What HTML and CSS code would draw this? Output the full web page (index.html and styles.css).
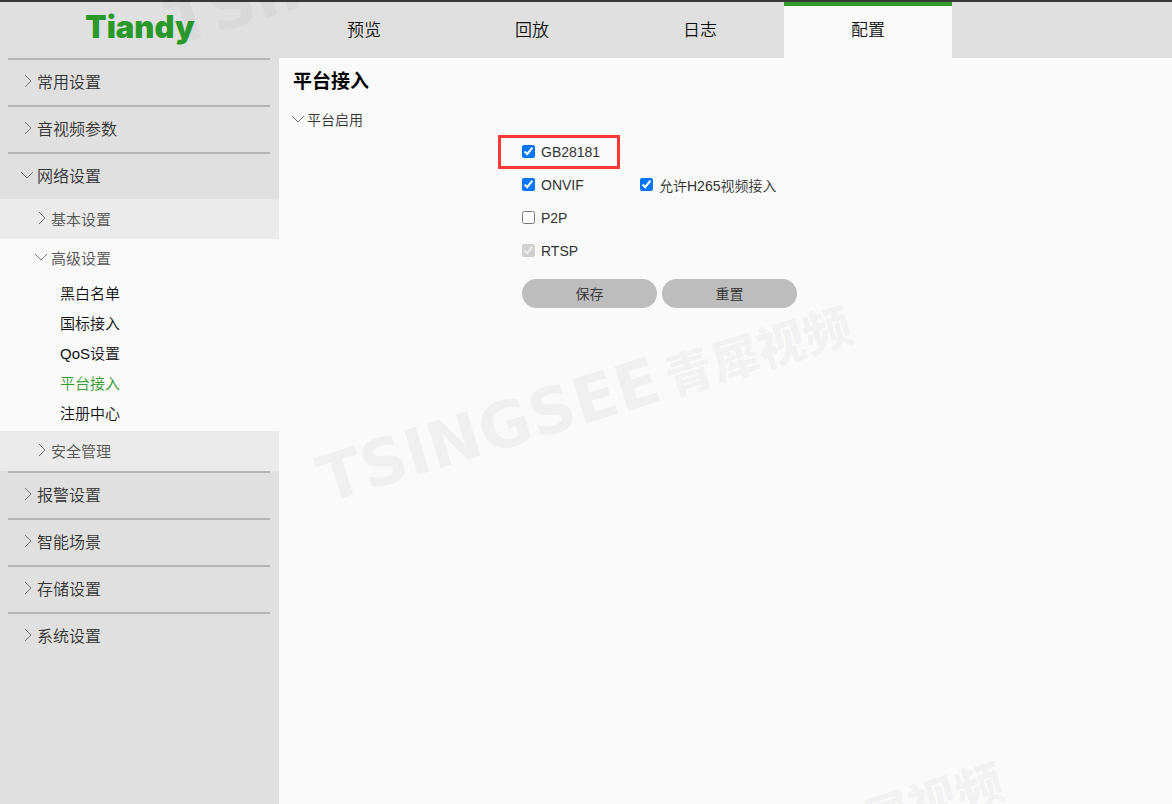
FILE: index.html
```
<!DOCTYPE html>
<html lang="zh-CN">
<head>
  <meta charset="UTF-8">
  <meta name="viewport" content="width=device-width, initial-scale=1.0">
  <title>Tiandy - 平台接入</title>
  <link rel="stylesheet" href="styles.css">
</head>
<body>
  <header class="header">
    <a href="#" class="logo">Tiandy</a>
    <nav class="tabs">
      <a href="#" class="tab">预览</a>
      <a href="#" class="tab">回放</a>
      <a href="#" class="tab">日志</a>
      <a href="#" class="tab active">配置</a>
    </nav>
  </header>

  <div class="layout">
    <nav class="sidebar">
      <button class="menu-item"><svg class="arrow" viewBox="0 0 14 14"><path d="M5 1l6 6-6 6"/></svg>常用设置</button>
      <button class="menu-item"><svg class="arrow" viewBox="0 0 14 14"><path d="M5 1l6 6-6 6"/></svg>音视频参数</button>
      <button class="menu-item"><svg class="arrow" viewBox="0 0 14 14"><path d="M1 4l6 6 6-6"/></svg>网络设置</button>

      <div class="submenu">
        <button class="submenu-item"><svg class="arrow" viewBox="0 0 14 14"><path d="M5 1l6 6-6 6"/></svg>基本设置</button>
        <div class="submenu-open">
          <button class="submenu-item open"><svg class="arrow" viewBox="0 0 14 14"><path d="M1 4l6 6 6-6"/></svg>高级设置</button>
          <div class="links">
            <a href="#">黑白名单</a>
            <a href="#">国标接入</a>
            <a href="#">QoS设置</a>
            <a href="#" class="current">平台接入</a>
            <a href="#">注册中心</a>
          </div>
        </div>
        <button class="submenu-item"><svg class="arrow" viewBox="0 0 14 14"><path d="M5 1l6 6-6 6"/></svg>安全管理</button>
      </div>

      <button class="menu-item"><svg class="arrow" viewBox="0 0 14 14"><path d="M5 1l6 6-6 6"/></svg>报警设置</button>
      <button class="menu-item"><svg class="arrow" viewBox="0 0 14 14"><path d="M5 1l6 6-6 6"/></svg>智能场景</button>
      <button class="menu-item"><svg class="arrow" viewBox="0 0 14 14"><path d="M5 1l6 6-6 6"/></svg>存储设置</button>
      <button class="menu-item"><svg class="arrow" viewBox="0 0 14 14"><path d="M5 1l6 6-6 6"/></svg>系统设置</button>
    </nav>

    <main class="content">
      <h1>平台接入</h1>
      <h2><svg class="arrow" viewBox="0 0 14 14"><path d="M1 4l6 6 6-6"/></svg>平台启用</h2>

      <form class="platform-form">
        <div class="row">
          <label class="check highlight"><input type="checkbox" checked>GB28181</label>
        </div>
        <div class="row">
          <label class="check"><input type="checkbox" checked>ONVIF</label>
          <label class="check"><input type="checkbox" checked>允许H265视频接入</label>
        </div>
        <div class="row">
          <label class="check"><input type="checkbox">P2P</label>
        </div>
        <div class="row">
          <label class="check"><input type="checkbox" checked disabled>RTSP</label>
        </div>
        <div class="actions">
          <button type="button">保存</button>
          <button type="button">重置</button>
        </div>
      </form>
    </main>
  </div>

  <!-- Watermark over the whole page -->
  <div class="watermarks" aria-hidden="true">
    <div class="watermark mark-top">TSIN</div>
    <div class="watermark mark-middle">TSINGSEE<span>青犀视频</span></div>
    <div class="watermark mark-bottom"><span>犀视频</span></div>
  </div>
</body>
</html>
```
FILE: styles.css
```
* {
  box-sizing: border-box;
}
body {
  font-family: "Liberation Sans", "Noto Sans CJK SC", sans-serif;
  font-size: 14px;
  font-weight: 350;
  color: #333;
  margin: 0;
  min-height: 100vh;
  display: flex;
  flex-direction: column;
  position: relative;
  background-color: #fafafa;
}
a {
  color: inherit;
  text-decoration: none;
}
button {
  font: inherit;
  color: inherit;
  border: none;
  padding: 0;
  background: none;
  cursor: pointer;
}
.header {
  display: grid;
  grid-template-columns: 280px 1fr;
  height: 58px;
  border-top: 2px solid #383838;
  background-color: #e0e0e0;
}
.logo {
  font-family: Inter, sans-serif;
  font-size: 31px;
  font-weight: 900;
  line-height: 50px;
  text-align: center;
  color: #28992a;
}
.tabs {
  display: flex;
}
.tab {
  width: 168px;
  padding-bottom: 4px;
  border-top: 4px solid transparent;
  border-bottom: 4px solid transparent;
  display: flex;
  align-items: center;
  justify-content: center;
  font-size: 17px;
  color: #111;
}
.tab.active {
  border-top-color: #33992b;
  background-color: #fafafa;
}
.layout {
  flex: 1;
  display: flex;
}
.arrow {
  width: 14px;
  height: 14px;
  flex: none;
  fill: none;
  stroke: #777;
  stroke-width: 1;
}

/* Sidebar */
.sidebar {
  width: 279px;
  flex: none;
  background-color: #e0e0e0;
}
.menu-item {
  display: flex;
  align-items: center;
  gap: 3px;
  width: 262px;
  height: 47px;
  margin-left: 8px;
  padding-left: 12px;
  padding-bottom: 4px;
  border-top: 2px solid #b5b5b5;
  font-size: 16px;
}
.submenu {
  background-color: #ebebeb;
}
.submenu-item {
  display: flex;
  align-items: center;
  gap: 3px;
  width: 100%;
  height: 40px;
  padding-left: 34px;
  padding-bottom: 2px;
  font-size: 15px;
  color: #555;
}
.submenu-item.open {
  height: 38px;
}
.submenu-open {
  background-color: #fafafa;
}
.links {
  padding: 2px 0 2px 60px;
}
.links a {
  display: block;
  line-height: 30px;
  font-size: 15px;
  color: #111;
}
.links a.current {
  color: #33992b;
}

/* Content */
.content {
  flex: 1;
  padding: 8px 12px;
}
h1 {
  font-size: 19px;
  line-height: 32px;
  margin: 0 2px;
  color: #000;
}
h2 {
  display: flex;
  align-items: center;
  gap: 2px;
  height: 33px;
  margin: 4px 0 0;
  font-size: 14px;
  font-weight: 350;
}
.platform-form {
  padding-left: 231px;
}
.row {
  display: flex;
  height: 33px;
}
.check {
  display: flex;
  align-items: center;
  gap: 6px;
  width: 118px;
  position: relative;
  white-space: nowrap;
}
.check input {
  width: 13px;
  height: 13px;
  margin: 0;
}
.highlight::after {
  content: "";
  position: absolute;
  top: 0;
  left: -24px;
  width: 122px;
  height: 34px;
  box-sizing: border-box;
  border: 3px solid #fb3838;
}
.actions {
  display: flex;
  gap: 5px;
  margin-top: 12px;
}
.actions button {
  width: 135px;
  height: 29px;
  padding-bottom: 2px;
  border-radius: 15px;
  background-color: #bdbdbd;
}

/* Watermark */
.watermarks {
  position: absolute;
  inset: 0;
  overflow: hidden;
  pointer-events: none;
}
.watermark {
  position: absolute;
  display: flex;
  align-items: center;
  gap: 8px;
  font-family: "DejaVu Sans", sans-serif;
  font-size: 64px;
  font-weight: bold;
  line-height: 64px;
  white-space: nowrap;
  color: rgba(0, 0, 0, 0.04);
  transform: rotate(-17deg);
  transform-origin: 0 50%;
}
.watermark span {
  font-family: "Noto Sans CJK SC", sans-serif;
  font-size: 48px;
  font-weight: 900;
}
.mark-top {
  left: 168px;
  top: -7px;
  color: rgba(0, 0, 0, 0.03);
}
.mark-middle {
  left: 320px;
  top: 450px;
}
.mark-bottom {
  left: 863px;
  top: 787px;
}
```
